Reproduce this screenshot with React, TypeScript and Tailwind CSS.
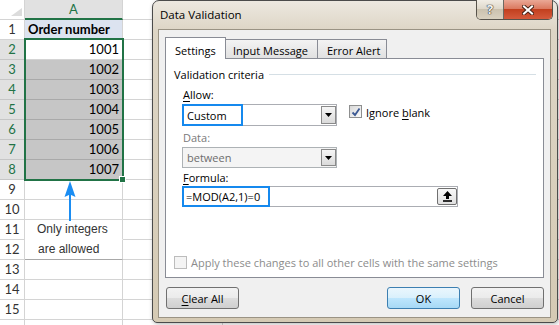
import React from 'react';

const rows = Array.from({ length: 16 }, (_, i) => i + 1);
const values: Record<number, string> = { 2: '1001', 3: '1002', 4: '1003', 5: '1004', 6: '1005', 7: '1006', 8: '1007' };

function DropArrow() {
  return (
    <svg width="7" height="4" viewBox="0 0 7 4">
      <path d="M0 0h7L3.5 4z" fill="#000" />
    </svg>
  );
}

function Checkbox({ checked, disabled }: { checked?: boolean; disabled?: boolean }) {
  return (
    <div
      className={
        disabled
          ? 'flex h-[13px] w-[13px] shrink-0 items-center justify-center border border-[#bcbcbc] bg-[#f4f4f4]'
          : 'flex h-[13px] w-[13px] shrink-0 items-center justify-center border border-[#8e8f8f] bg-[linear-gradient(135deg,#d8d8d8,#fbfbfb)]'
      }
    >
      {checked && (
        <svg width="10" height="10" viewBox="0 0 10 10">
          <path d="M1.5 5.5 L4 8 L8.5 1.5" stroke="#3d5a94" strokeWidth="1.8" fill="none" />
        </svg>
      )}
    </div>
  );
}

function Sheet() {
  return (
    <div className="flex flex-col font-['Lato',sans-serif] text-[13px] text-[#222]">
      <div className="flex h-[20px]">
        <div className="flex w-[25px] items-end justify-end border-b border-r border-[#d4d4d4] bg-white pb-[3px] pr-[2px]">
          <svg width="11" height="8" viewBox="0 0 11 8">
            <path d="M11 0V8H0z" fill="#dcdcdc" />
          </svg>
        </div>
        <div className="w-[98px] border-b-2 border-r border-b-[#217346] border-r-[#d4d4d4] bg-[#e1e1e1] text-center leading-[18px] text-[#217346]">A</div>
        <div className="w-[100px] border-b border-r border-[#d4d4d4] bg-white" />
        <div className="flex-1 border-b border-[#d4d4d4]" />
      </div>
      {rows.map((r) => {
        const sel = r >= 2 && r <= 8;
        const grey = r >= 3 && r <= 8;
        let cellCls = 'w-[98px] border-r border-b border-r-[#d4d4d4] leading-[19px] ';
        if (r === 1) cellCls += 'bg-[#dce3f0] border-b-[#d4d4d4] pl-[3px] font-bold text-black';
        else if (grey) cellCls += 'bg-[#c6c6c6] border-b-[#a9a9a9] pr-[3px] text-right text-black';
        else if (r === 2) cellCls += 'bg-white border-b-[#d4d4d4] pr-[3px] text-right text-black';
        else if (r === 11) cellCls += 'bg-white border-b-white pl-[12px] font-["Liberation_Sans",Arial,sans-serif] text-[12px] text-[#333]';
        else if (r === 12) cellCls += 'bg-white border-b-[#a8a8a8] pl-[13px] font-["Liberation_Sans",Arial,sans-serif] text-[12px] text-[#333]';
        else cellCls += 'bg-white border-b-[#d4d4d4]';
        return (
          <div key={r} className="flex h-[20px]">
            <div
              className={
                sel
                  ? 'w-[25px] border-b border-r border-[#c6c6c6] bg-[#e1e1e1] text-center leading-[19px] text-[#217346]'
                  : 'w-[25px] border-b border-r border-[#d4d4d4] bg-white text-center leading-[19px] text-[#333]'
              }
            >
              {r <= 15 ? r : ''}
            </div>
            <div className={cellCls}>
              {r === 1 ? 'Order number' : r === 11 ? 'Only integers' : r === 12 ? 'are allowed' : values[r] ?? ''}
            </div>
            <div className="w-[100px] border-b border-r border-[#d4d4d4]" />
            <div className="flex-1 border-b border-[#d4d4d4]" />
          </div>
        );
      })}
    </div>
  );
}

function Dialog() {
  return (
    <div className="absolute left-[152px] top-0 flex h-[323px] w-[406px] flex-col rounded-t-[7px] rounded-b-[5px] border border-[#4b4b4b] bg-[linear-gradient(#ece8e0,#ddd5c5_30px,#d5cab4)] font-['Open_Sans',sans-serif] text-[11px] text-black shadow-[1px_1px_4px_rgba(0,0,0,0.3)]">
      {/* Title bar */}
      <div className="flex h-[28px] shrink-0">
        <div className="pl-[7px] pt-[6px] text-[11.5px] leading-[16px] text-black">Data Validation</div>
        <div className="-mt-px ml-auto mr-[4px] flex h-[20px] overflow-hidden rounded-b-[5px] border border-t-0 border-[#57534b]">
          <div className="flex w-[27px] items-center justify-center border-r border-[#6d6a63] bg-[linear-gradient(#f1ede5,#ddd6c8_50%,#cbc2af_50%,#d9d1c0)] text-[13px] font-bold leading-none text-[#f4f4f4] [text-shadow:0_0_1px_#333,0_0_1px_#333,0_0_1px_#333]">
            ?
          </div>
          <div className="flex w-[48px] items-center justify-center bg-[linear-gradient(#eaa896,#db7a61_45%,#c2401f_50%,#d55a3c)]">
            <svg width="12" height="10" viewBox="0 0 12 10">
              <path d="M2 1.5 L10 8.5 M10 1.5 L2 8.5" stroke="#4a2418" strokeWidth="4" strokeLinecap="square" />
              <path d="M2 1.5 L10 8.5 M10 1.5 L2 8.5" stroke="#fff" strokeWidth="2" strokeLinecap="square" />
            </svg>
          </div>
        </div>
      </div>

      {/* Client area */}
      <div className="mb-[4px] ml-[5px] mr-[6px] flex flex-1 flex-col border border-[#9a9384] bg-[#f0f0f0] px-[6px] pt-[7px]">
        {/* Tabs */}
        <div className="relative z-10 -mb-px flex items-end">
          <div className="h-[22px] w-[61px] border border-b-0 border-[#898c95] bg-white pl-[9px] pt-[5px] leading-[15px]">Settings</div>
          <div className="h-[20px] w-[92px] border border-l-0 border-[#898c95] bg-[linear-gradient(#f3f3f3,#e1e1e1)] pl-[7px] pt-[3px] leading-[15px]">Input Message</div>
          <div className="h-[20px] w-[69px] border border-l-0 border-[#898c95] bg-[linear-gradient(#f3f3f3,#e1e1e1)] pl-[9px] pt-[3px] leading-[15px]">Error Alert</div>
        </div>

        {/* Panel */}
        <div className="flex h-[220px] flex-col border border-[#898c95] bg-white">
          <div className="mt-[8px] flex items-center pl-[8px] pr-[7px] leading-[15px]">
            <span>Validation criteria</span>
            <div className="ml-[5px] h-px flex-1 bg-[#d5dfe5]" />
          </div>

          <div className="ml-[16px] flex flex-col">
            <div className="mt-[5px] pl-[1px] leading-[15px]">
              <span className="underline underline-offset-2">A</span>llow:
            </div>
            <div className="mt-[2px] flex items-start">
              <div className="relative flex h-[22px] w-[155px] items-center border border-[#abadb3] bg-white pl-[4px]">
                <span className="leading-[15px]">Custom</span>
                <div className="ml-auto flex h-[18px] w-[15px] items-center justify-center border border-[#8a8a8a] bg-[linear-gradient(#f6f6f6,#dadada)]">
                  <DropArrow />
                </div>
                <div className="absolute -left-px -top-px h-[22px] w-[61px] border-2 border-[#1589ee]" />
              </div>
              <div className="ml-[12px] mt-[1px]">
                <Checkbox checked />
              </div>
              <div className="ml-[4px] mt-[1px] leading-[15px]">
                Ignore <span className="underline underline-offset-2">b</span>lank
              </div>
            </div>

            <div className="mt-[4px] pl-[1px] leading-[15px] text-[#7a7a7a]">Data:</div>
            <div className="mt-[2px] flex h-[21px] w-[155px] items-center border border-[#adb2b5] bg-[#f4f4f4] pl-[4px] text-[#6d6d6d]">
              <span className="leading-[15px]">between</span>
              <div className="ml-auto flex h-[17px] w-[15px] items-center justify-center border border-[#8a8a8a] bg-[linear-gradient(#f6f6f6,#dadada)]">
                <DropArrow />
              </div>
            </div>

            <div className="mt-[2px] pl-[1px] leading-[15px]">
              <span className="underline underline-offset-2">F</span>ormula:
            </div>
            <div className="relative mt-px flex h-[21px] w-[276px] items-center border border-[#abadb3] bg-white pl-[3px]">
              <span className="leading-[15px]">=MOD(A2,1)=0</span>
              <div className="ml-auto flex h-[17px] w-[20px] items-center justify-center rounded-[2px] border border-[#707070] bg-[linear-gradient(#f8f8f8,#e0e0e0)]">
                <svg width="9" height="11" viewBox="0 0 9 11">
                  <path d="M4.5 0 L9 5 L6 5 L6 8 L3 8 L3 5 L0 5 Z" fill="#000" />
                  <path d="M0 9.2h9v1.6H0z" fill="#000" />
                </svg>
              </div>
              <div className="absolute -left-px -top-px h-[21px] w-[88px] border-2 border-[#1589ee]" />
            </div>
          </div>

          <div className="mb-[7px] mt-auto flex items-center pl-[8px] leading-[15px] text-[#8c8c8c]">
            <Checkbox disabled />
            <span className="ml-[4px]">Apply these changes to all other cells with the same settings</span>
          </div>
        </div>

        {/* Buttons */}
        <div className="mt-[9px] flex h-[22px]">
          <div className="ml-px flex w-[73px] items-center justify-center rounded-[3px] border border-[#707070] bg-[linear-gradient(#f2f2f2_0%,#ebebeb_50%,#dddddd_50%,#cfcfcf_100%)] leading-[15px]">
            <span>
              <span className="underline underline-offset-2">C</span>lear All
            </span>
          </div>
          <div className="ml-auto flex w-[73px] items-center justify-center rounded-[3px] border border-[#3c7fb1] bg-[linear-gradient(#eaf6fd_0%,#d9f0fc_50%,#bee6fd_50%,#a7d9f5_100%)] leading-[15px]">
            OK
          </div>
          <div className="ml-[11px] flex w-[73px] items-center justify-center rounded-[3px] border border-[#707070] bg-[linear-gradient(#f2f2f2_0%,#ebebeb_50%,#dddddd_50%,#cfcfcf_100%)] leading-[15px]">
            Cancel
          </div>
        </div>
      </div>
    </div>
  );
}

export default function App() {
  return (
    <div className="relative h-[325px] w-[559px] overflow-hidden bg-white">
      <Sheet />

      {/* selection outline and fill handle */}
      <div className="absolute left-[24px] top-[38px] h-[143px] w-[100px] border-2 border-[#217346]" />
      <div className="absolute left-[119px] top-[176px] h-[7px] w-[7px] border border-white bg-[#217346]" />

      {/* annotation arrow */}
      <svg className="absolute left-[64px] top-[181px]" width="12" height="40" viewBox="0 0 12 40">
        <path d="M6 0 L11.5 16 L6 13.5 L0.5 16 Z" fill="#1b8df2" />
        <rect x="5" y="12" width="2" height="28" fill="#1b8df2" />
      </svg>

      <Dialog />
    </div>
  );
}
